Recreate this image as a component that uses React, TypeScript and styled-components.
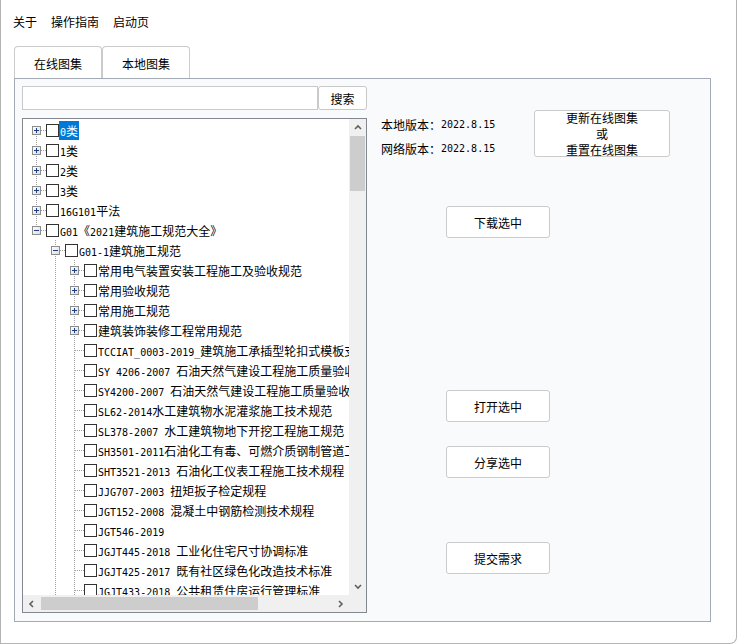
import React from 'react';
import styled, { createGlobalStyle } from 'styled-components';

const Global = createGlobalStyle`
  html, body { margin: 0; padding: 0; background: #fff; }
  body {
    font-family: "Noto Sans CJK SC", "Microsoft YaHei", sans-serif;
    font-size: 12px;
    color: #000;
  }
  * { box-sizing: border-box; }
`;

const Frame = styled.div`
  width: 737px;
  height: 644px;
  border: 1px solid #b4b4b4;
  border-top: none;
  border-bottom-right-radius: 7px;
  background: #fff;
  display: flex;
  flex-direction: column;
  overflow: hidden;
`;

const MenuBar = styled.div`
  display: flex;
  gap: 14px;
  padding: 14px 0 0 12px;
  line-height: 16px;
  height: 30px;
`;

const MenuItem = styled.span`
  color: #000;
`;

const TabRow = styled.div`
  display: flex;
  margin: 16px 0 0 13px;
`;

const Tab = styled.div`
  width: 88px;
  height: 32px;
  border: 1px solid #cbcbcb;
  border-bottom: none;
  border-radius: 4px 4px 0 0;
  background: #fff;
  display: flex;
  align-items: center;
  justify-content: center;
  padding-top: 1px;
`;

const Panel = styled.div`
  margin-left: 13px;
  width: 697px;
  height: 544px;
  border: 1px solid #a3aab3;
  background: #f9fafc;
  padding: 7px;
  display: flex;
`;

const LeftCol = styled.div`
  width: 345px;
  display: flex;
  flex-direction: column;
`;

const SearchRow = styled.div`
  display: flex;
  height: 24px;
`;

const SearchInput = styled.div`
  width: 296px;
  height: 24px;
  border: 1px solid #cacaca;
  background: #fff;
`;

const SmallButton = styled.div`
  width: 49px;
  height: 24px;
  border: 1px solid #c8c8c8;
  border-radius: 3px;
  background: #fff;
  display: flex;
  align-items: center;
  justify-content: center;
`;

const TreeBox = styled.div`
  margin-top: 8px;
  height: 495px;
  border: 1px solid #828790;
  background: #fff;
  display: grid;
  grid-template-columns: 1fr 17px;
  grid-template-rows: 1fr 17px;
`;

const Viewport = styled.div`
  overflow: hidden;
  padding-top: 1px;
`;

const Row = styled.div`
  display: flex;
  align-items: center;
  height: 20px;
  padding-left: 9px;
  white-space: nowrap;
`;

const dotsV = `repeating-linear-gradient(to bottom, #a0a0a0 0 1px, transparent 1px 2px)`;
const dotsH = `repeating-linear-gradient(to right, #a0a0a0 0 1px, transparent 1px 2px)`;

const Guide = styled.div<{ $on: boolean }>`
  width: 19px;
  height: 20px;
  flex: none;
  position: relative;
  &::before {
    content: '';
    display: ${(p) => (p.$on ? 'block' : 'none')};
    position: absolute;
    left: 4px;
    top: 0;
    width: 1px;
    height: 20px;
    background: ${dotsV};
  }
`;

const Connector = styled.div<{ $first: boolean; $last: boolean }>`
  width: 14px;
  height: 20px;
  flex: none;
  position: relative;
  &::before {
    content: '';
    position: absolute;
    left: 4px;
    top: ${(p) => (p.$first ? '10px' : '0')};
    width: 1px;
    height: ${(p) => (p.$first && p.$last ? '0' : p.$first || p.$last ? '10px' : '20px')};
    background: ${dotsV};
  }
  &::after {
    content: '';
    position: absolute;
    left: 5px;
    top: 10px;
    width: 9px;
    height: 1px;
    background: ${dotsH};
  }
`;

const ExpanderBox = styled.div`
  position: absolute;
  left: 0;
  top: 6px;
  width: 9px;
  height: 9px;
  z-index: 1;
  background: #fff;
  display: flex;
`;

const Check = styled.div`
  width: 13px;
  height: 13px;
  flex: none;
  border: 1px solid #333;
  background: #fff;
`;

const Label = styled.span<{ $selected?: boolean }>`
  height: 19px;
  line-height: 19px;
  padding: 0 1px;
  background: ${(p) => (p.$selected ? '#0078d7' : 'transparent')};
  color: ${(p) => (p.$selected ? '#fff' : '#000')};
`;

const Ascii = styled.span`
  font-family: "DejaVu Sans Mono", "Liberation Mono", monospace;
  font-size: 10px;
`;

const VScroll = styled.div`
  background: #f0f0f0;
  display: flex;
  flex-direction: column;
`;

const HScroll = styled.div`
  background: #f0f0f0;
  display: flex;
  align-items: center;
`;

const Corner = styled.div`
  background: #f0f0f0;
`;

const ArrowCell = styled.div`
  width: 17px;
  height: 17px;
  flex: none;
  display: flex;
  align-items: center;
  justify-content: center;
`;

const VThumb = styled.div`
  margin: 0 1px;
  height: 55px;
  background: #cdcdcd;
`;

const VTrack = styled.div`
  flex: 1;
`;

const HThumb = styled.div`
  width: 217px;
  height: 13px;
  margin-left: 1px;
  background: #cdcdcd;
`;

const HTrack = styled.div`
  flex: 1;
`;

const RightCol = styled.div`
  flex: 1;
  padding: 24px 0 0 14px;
  display: flex;
  flex-direction: column;
`;

const TopRow = styled.div`
  display: flex;
  height: 47px;
`;

const Versions = styled.div`
  width: 153px;
  padding-top: 2px;
`;

const VersionLine = styled.div`
  height: 24px;
  display: flex;
  align-items: center;
`;

const BaseButton = styled.div`
  border: 1px solid #cbcbcb;
  border-radius: 3px;
  background: #fff;
  display: flex;
  align-items: center;
  justify-content: center;
  text-align: center;
`;

const UpdateButton = styled(BaseButton)`
  width: 136px;
  height: 47px;
  line-height: 16px;
  flex-direction: column;
  overflow: visible;
`;

const ActionButton = styled(BaseButton)<{ $gap: number }>`
  width: 104px;
  height: 32px;
  flex: none;
  margin-left: 65px;
  margin-top: ${(p) => p.$gap}px;
`;

function Txt({ s }: { s: string }) {
  const parts = s.split(/([\x20-\x7e]+)/).filter((x) => x.length > 0);
  return (
    <>
      {parts.map((p, i) =>
        /^[\x20-\x7e]+$/.test(p) ? <Ascii key={i}>{p}</Ascii> : <React.Fragment key={i}>{p}</React.Fragment>
      )}
    </>
  );
}

function Expander({ open }: { open: boolean }) {
  return (
    <ExpanderBox>
      <svg width="9" height="9" viewBox="0 0 9 9">
        <defs>
          <linearGradient id="eg" x1="0" y1="0" x2="1" y2="1">
            <stop offset="0" stopColor="#ffffff" />
            <stop offset="1" stopColor="#dcdcdc" />
          </linearGradient>
        </defs>
        <rect x="0.5" y="0.5" width="8" height="8" fill="url(#eg)" stroke="#8d8d8d" />
        <rect x="2" y="4" width="5" height="1" fill="#1e3f86" />
        {!open && <rect x="4" y="2" width="1" height="5" fill="#1e3f86" />}
      </svg>
    </ExpanderBox>
  );
}

type Node = {
  label: string;
  level: number;
  exp?: 'open' | 'closed';
  first?: boolean;
  last?: boolean;
  selected?: boolean;
};

const L2 = (label: string, exp?: 'open' | 'closed'): Node => ({ label, level: 2, exp });

const nodes: Node[] = [
  { label: '0类', level: 0, exp: 'closed', first: true, selected: true },
  { label: '1类', level: 0, exp: 'closed' },
  { label: '2类', level: 0, exp: 'closed' },
  { label: '3类', level: 0, exp: 'closed' },
  { label: '16G101平法', level: 0, exp: 'closed' },
  { label: 'G01《2021建筑施工规范大全》', level: 0, exp: 'open', last: true },
  { label: 'G01-1建筑施工规范', level: 1, exp: 'open' },
  L2('常用电气装置安装工程施工及验收规范', 'closed'),
  L2('常用验收规范', 'closed'),
  L2('常用施工规范', 'closed'),
  L2('建筑装饰装修工程常用规范', 'closed'),
  L2('TCCIAT_0003-2019_建筑施工承插型轮扣式模板支架安全技术规程'),
  L2('SY 4206-2007 石油天然气建设工程施工质量验收规范'),
  L2('SY4200-2007 石油天然气建设工程施工质量验收规范'),
  L2('SL62-2014水工建筑物水泥灌浆施工技术规范'),
  L2('SL378-2007 水工建筑物地下开挖工程施工规范'),
  L2('SH3501-2011石油化工有毒、可燃介质钢制管道工程施工及验收规范'),
  L2('SHT3521-2013 石油化工仪表工程施工技术规程'),
  L2('JJG707-2003 扭矩扳子检定规程'),
  L2('JGT152-2008 混凝土中钢筋检测技术规程'),
  L2('JGT546-2019'),
  L2('JGJT445-2018 工业化住宅尺寸协调标准'),
  L2('JGJT425-2017 既有社区绿色化改造技术标准'),
  L2('JGJT433-2018 公共租赁住房运行管理标准'),
  L2('JGJT436-2018 住宅建筑室内装修污染控制技术标准'),
];

// guide lines for ancestor levels: level0 ancestor (G01) is last -> none; level1 ancestor (G01-1) continues
const guidesFor = (level: number): boolean[] => {
  if (level === 0) return [];
  if (level === 1) return [false];
  return [false, true];
};

function Chevron({ dir }: { dir: 'up' | 'down' | 'left' | 'right' }) {
  const pts = {
    up: '1,5 4,2 7,5',
    down: '1,2 4,5 7,2',
    left: '5,1 2,4 5,7',
    right: '2,1 5,4 2,7',
  }[dir];
  return (
    <svg width="8" height="8" viewBox="0 0 8 8">
      <polyline points={pts} fill="none" stroke="#606060" strokeWidth="1.6" />
    </svg>
  );
}

export default function App() {
  return (
    <>
      <Global />
      <Frame>
        <MenuBar>
          <MenuItem>关于</MenuItem>
          <MenuItem>操作指南</MenuItem>
          <MenuItem>启动页</MenuItem>
        </MenuBar>
        <TabRow>
          <Tab>在线图集</Tab>
          <Tab>本地图集</Tab>
        </TabRow>
        <Panel>
          <LeftCol>
            <SearchRow>
              <SearchInput />
              <SmallButton>搜索</SmallButton>
            </SearchRow>
            <TreeBox>
              <Viewport>
                {nodes.map((n, i) => (
                  <Row key={i}>
                    {guidesFor(n.level).map((g, j) => (
                      <Guide key={j} $on={g} />
                    ))}
                    <Connector $first={!!n.first} $last={!!n.last}>
                      {n.exp && <Expander open={n.exp === 'open'} />}
                    </Connector>
                    <Check />
                    <Label $selected={n.selected}>
                      <Txt s={n.label} />
                    </Label>
                  </Row>
                ))}
              </Viewport>
              <VScroll>
                <ArrowCell>
                  <Chevron dir="up" />
                </ArrowCell>
                <VThumb />
                <VTrack />
                <ArrowCell>
                  <Chevron dir="down" />
                </ArrowCell>
              </VScroll>
              <HScroll>
                <ArrowCell>
                  <Chevron dir="left" />
                </ArrowCell>
                <HThumb />
                <HTrack />
                <ArrowCell>
                  <Chevron dir="right" />
                </ArrowCell>
              </HScroll>
              <Corner />
            </TreeBox>
          </LeftCol>
          <RightCol>
            <TopRow>
              <Versions>
                <VersionLine>
                  本地版本：<Ascii>2022.8.15</Ascii>
                </VersionLine>
                <VersionLine>
                  网络版本：<Ascii>2022.8.15</Ascii>
                </VersionLine>
              </Versions>
              <UpdateButton>
                <span>更新在线图集</span>
                <span>或</span>
                <span>重置在线图集</span>
              </UpdateButton>
            </TopRow>
            <ActionButton $gap={49}>下载选中</ActionButton>
            <ActionButton $gap={152}>打开选中</ActionButton>
            <ActionButton $gap={24}>分享选中</ActionButton>
            <ActionButton $gap={64}>提交需求</ActionButton>
          </RightCol>
        </Panel>
      </Frame>
    </>
  );
}
